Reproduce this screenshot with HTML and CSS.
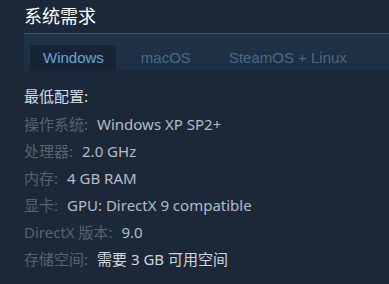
FILE: index.html
```html
<!DOCTYPE html>
<html lang="zh">
<head>
<meta charset="utf-8">
<link rel="stylesheet" href="styles.css">
</head>
<body>
<div class="page">
  <h2 class="title">系统需求</h2>
  <div class="tabs">
    <div class="tab active">Windows</div>
    <div class="tab">macOS</div>
    <div class="tab">SteamOS + Linux</div>
  </div>
  <div class="reqs">
    <div class="head">最低配置:</div>
    <div class="row"><span class="lbl">操作系统:</span><span class="val">Windows XP SP2+</span></div>
    <div class="row"><span class="lbl">处理器:</span><span class="val">2.0 GHz</span></div>
    <div class="row"><span class="lbl">内存:</span><span class="val">4 GB RAM</span></div>
    <div class="row"><span class="lbl">显卡:</span><span class="val">GPU: DirectX 9 compatible</span></div>
    <div class="row"><span class="lbl">DirectX 版本:</span><span class="val">9.0</span></div>
    <div class="row"><span class="lbl">存储空间:</span><span class="val hi">需要 3 GB 可用空间</span></div>
  </div>
</div>
</body>
</html>
```

FILE: styles.css
```css
html, body {
  margin: 0;
  padding: 0;
  background: #1b2838;
}
.page {
  padding-left: 24px;
  font-family: "Noto Sans", "Noto Sans CJK SC", sans-serif;
}
.title {
  margin: 0;
  padding-top: 2px;
  font-size: 18px;
  font-weight: normal;
  line-height: 26px;
  color: #ffffff;
  font-family: "Noto Sans CJK SC", sans-serif;
  border-bottom: 1px solid #3a5770;
  box-sizing: border-box;
  height: 34px;
}
.tabs {
  display: flex;
  align-items: flex-end;
  height: 37px;
  padding-left: 6px;
  background: linear-gradient(to bottom, #1f3347, #1d2f42);
  font-family: "Liberation Sans", Arial, sans-serif;
  font-size: 15px;
}
.tab {
  height: 26px;
  line-height: 26px;
  padding: 0 13px;
  color: #4a6a85;
  margin-right: 12px;
}
.tab.active {
  background: #172433;
  color: #67a6d4;
  padding-right: 12px;
  margin-right: 13px;
}
.tab.active + .tab {
  padding-left: 12px;
}
.reqs {
  padding-top: 13px;
  font-size: 15px;
}
.head {
  color: #d6dce2;
  height: 24px;
  line-height: 24px;
  font-family: "Noto Sans CJK SC", sans-serif;
  margin-bottom: 3px;
}
.row {
  height: 27px;
  line-height: 27px;
  display: flex;
  gap: 9px;
}
.lbl {
  color: #56636f;
  font-family: "Noto Sans", "Noto Sans CJK SC", sans-serif;
}
.val {
  color: #b4bcc4;
}
.val.hi {
  color: #d0d6dc;
  font-family: "Noto Sans", "Noto Sans CJK SC", sans-serif;
}
```
